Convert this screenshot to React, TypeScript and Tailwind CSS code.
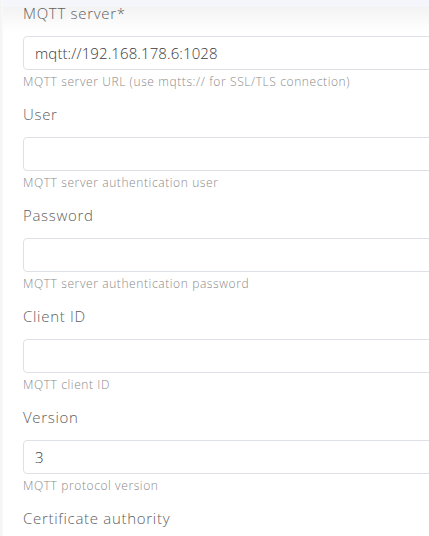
import React from 'react';

type Field = {
  label: string;
  value?: string;
  help: string;
};

const FIELDS: Field[] = [
  { label: 'MQTT server*', value: 'mqtt://192.168.178.6:1028', help: 'MQTT server URL (use mqtts:// for SSL/TLS connection)' },
  { label: 'User', help: 'MQTT server authentication user' },
  { label: 'Password', help: 'MQTT server authentication password' },
  { label: 'Client ID', help: 'MQTT client ID' },
  { label: 'Version', value: '3', help: 'MQTT protocol version' },
];

function FormField({ field }: { field: Field }) {
  return (
    <div className="h-[101px]">
      <label className="block pt-[3px] text-[15px] leading-[20px] tracking-[0.7px] text-[#606060]">
        {field.label}
      </label>
      <div className="mt-[13px] flex h-[34px] w-[430px] items-center rounded-[4px] border border-[#dde1e6] bg-white px-[11px] text-[15px] tracking-[0.1px] text-[#3a3a3a]">
        {field.value}
      </div>
      <p className="mt-[4px] text-[12px] leading-[16px] tracking-[0.6px] text-[#8a8a8a]">
        {field.help}
      </p>
    </div>
  );
}

export default function App() {
  return (
    <div
      className="relative h-[536px] w-[429px] overflow-hidden bg-white"
      style={{ fontFamily: '"Open Sans", "Liberation Sans", sans-serif' }}
    >
      <div className="absolute inset-x-0 top-0 h-[7px] bg-[#f4f6fb]" />
      <div className="absolute inset-x-0 top-[7px] h-[24px] bg-gradient-to-b from-[#f3f3f3] to-transparent" />
      <div className="relative flex h-full">
        <div className="w-[3px] shrink-0 bg-gradient-to-r from-[#f3f3f3] to-[#fafafa]" />
        <div className="flex-1 pl-[20px] font-light">
          {FIELDS.map((f) => (
            <FormField key={f.label} field={f} />
          ))}
          <label className="block pt-[3px] text-[15px] leading-[20px] tracking-[0.7px] text-[#606060]">
            Certificate authority
          </label>
        </div>
      </div>
    </div>
  );
}
